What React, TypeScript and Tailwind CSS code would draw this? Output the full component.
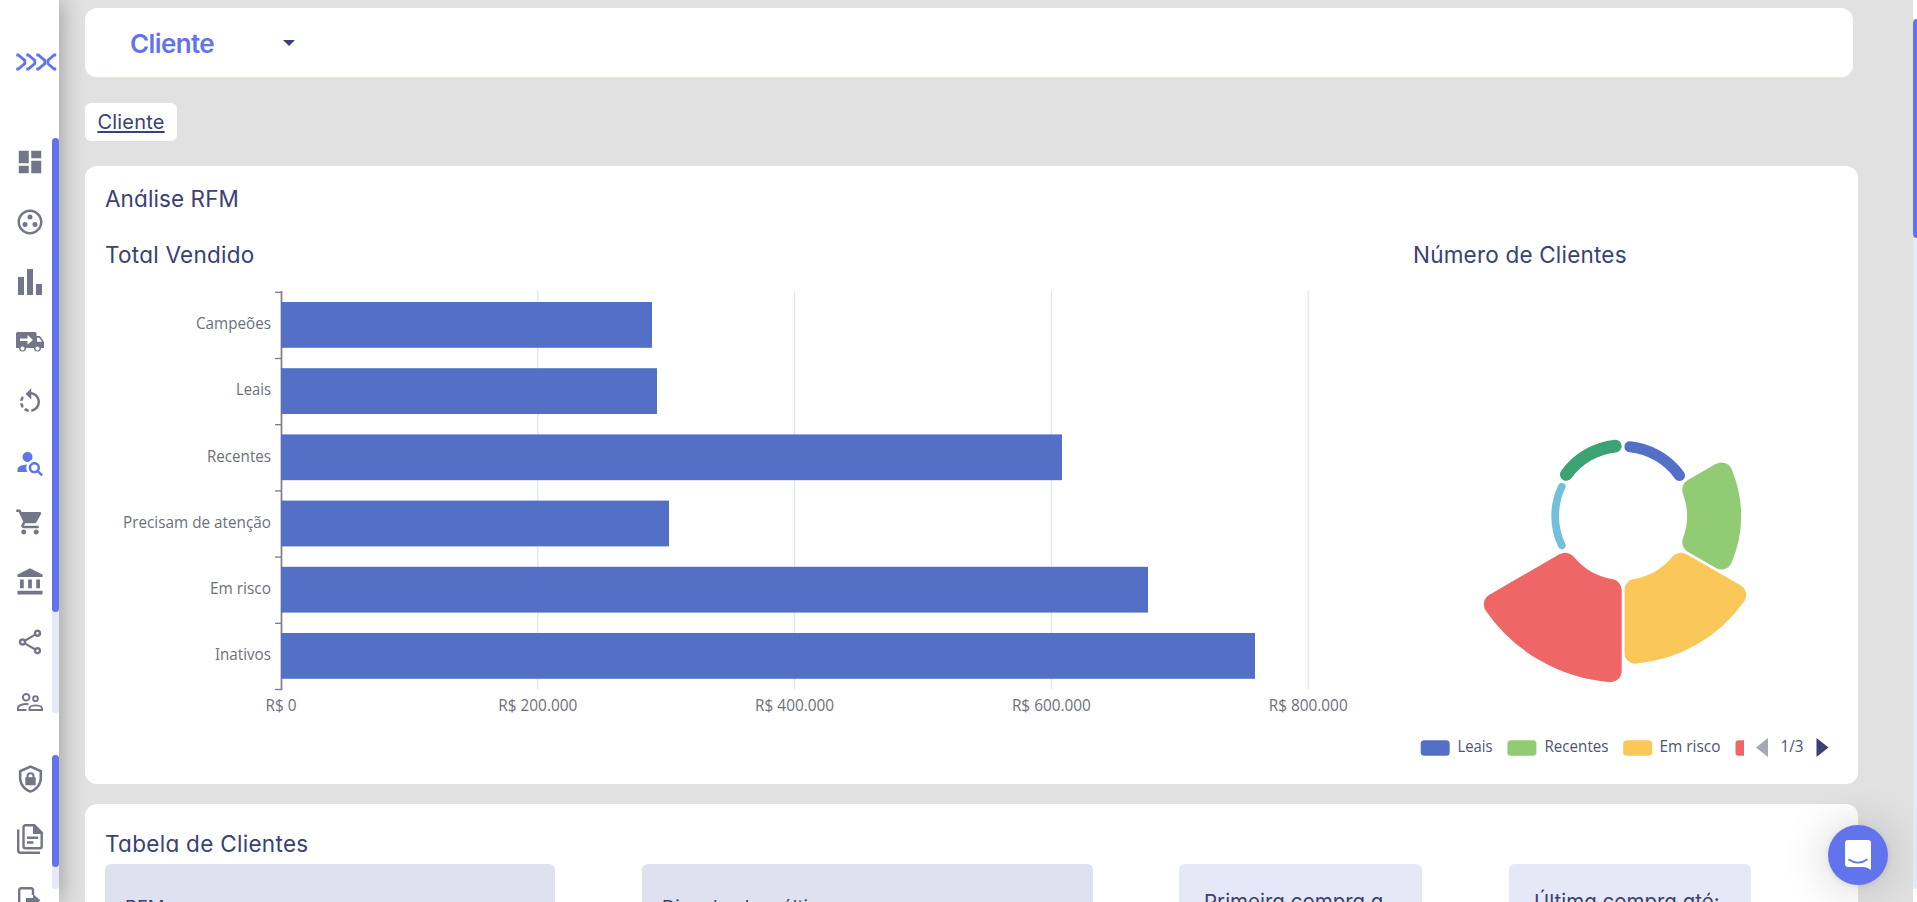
import type { ReactNode } from 'react';
import {
  MdDashboard,
  MdOutlineGroupWork,
  MdRotateLeft,
  MdShoppingCart,
  MdAccountBalance,
  MdOutlineShare,
} from 'react-icons/md';

const BLUE = '#5470c6';
const GREEN = '#91cc75';
const YELLOW = '#fac858';
const RED = '#ee6666';
const SKY = '#73c0de';
const DARK_GREEN = '#3ba272';

const bars = [
  { label: 'Campeões', end: 567, labelWidth: 75 },
  { label: 'Leais', end: 572, labelWidth: 35 },
  { label: 'Recentes', end: 977, labelWidth: 64 },
  { label: 'Precisam de atenção', end: 584, labelWidth: 148 },
  { label: 'Em risco', end: 1063, labelWidth: 61 },
  { label: 'Inativos', end: 1170, labelWidth: 56 },
];

const ticks = ['R$ 0', 'R$ 200.000', 'R$ 400.000', 'R$ 600.000', 'R$ 800.000'];

const slices = [
  { color: BLUE, outer: 76.5 },
  { color: GREEN, outer: 119.5 },
  { color: YELLOW, outer: 149.5 },
  { color: RED, outer: 168 },
  { color: SKY, outer: 73 },
  { color: DARK_GREEN, outer: 78 },
];

function BarChart() {
  const x0 = 196;
  const y0 = 23;
  const step = 66.2;
  return (
    <svg width="1290" height="464" viewBox="0 0 1290 464" className="shrink-0 font-['Open_Sans','Noto_Sans',sans-serif]" fontSize="15.7">
      {ticks.map((t, i) => (
        <g key={t}>
          {i > 0 && <line x1={x0 + i * 256.8} x2={x0 + i * 256.8} y1={y0 - 1} y2={y0 + step * 6} stroke="#e0e6f1" strokeWidth="1.3" />}
          <text
            x={x0 + i * 256.8}
            y={y0 + step * 6 + 22}
            textAnchor="middle"
            textLength={i === 0 ? 31 : 79}
            lengthAdjust="spacingAndGlyphs"
            fill="#6e7079"
          >
            {t}
          </text>
        </g>
      ))}
      <line x1={x0 + 0.5} x2={x0 + 0.5} y1={y0 - 1} y2={y0 + step * 6 + 1} stroke="#85828d" strokeWidth="1.8" />
      {[0, 1, 2, 3, 4, 5, 6].map((i) => (
        <line key={i} x1={x0 - 6} x2={x0} y1={y0 + i * step + 0.3} y2={y0 + i * step + 0.3} stroke="#7c7a86" strokeWidth="1.3" />
      ))}
      {bars.map((b, i) => (
        <g key={b.label}>
          <rect x={x0} y={y0 + 10 + i * step} width={b.end - x0} height="45.8" fill={BLUE} />
          <text
            x={x0 - 10}
            y={y0 + 37.2 + i * step}
            textAnchor="end"
            textLength={b.labelWidth}
            lengthAdjust="spacingAndGlyphs"
            fill="#6e7079"
          >
            {b.label}
          </text>
        </g>
      ))}
    </svg>
  );
}

// Rounded annular sector, angles clockwise from 12 o'clock
function slicePath(r: number, R: number, a0: number, a1: number, radius: number) {
  const c = Math.min(radius, (R - r) / 2);
  const pt = (d: number, a: number) => `${(d * Math.sin(a)).toFixed(2)} ${(-d * Math.cos(a)).toFixed(2)}`;
  const ao = Math.asin(c / (R - c));
  const ai = Math.asin(c / (r + c));
  const lo = Math.sqrt((R - c) ** 2 - c * c);
  const li = Math.sqrt((r + c) ** 2 - c * c);
  return [
    `M${pt(li, a0)}L${pt(lo, a0)}`,
    `A${c} ${c} 0 0 1 ${pt(R, a0 + ao)}`,
    `A${R} ${R} 0 0 1 ${pt(R, a1 - ao)}`,
    `A${c} ${c} 0 0 1 ${pt(lo, a1)}`,
    `L${pt(li, a1)}`,
    `A${c} ${c} 0 0 1 ${pt(r, a1 - ai)}`,
    `A${r} ${r} 0 0 0 ${pt(r, a0 + ai)}`,
    `A${c} ${c} 0 0 1 ${pt(li, a0)}Z`,
  ].join('');
}

function RoseChart() {
  return (
    <svg width="440" height="464" viewBox="0 0 440 464" className="shrink-0">
      <g transform="translate(248 247)" stroke="#fff" strokeWidth="2.6">
        {slices.map((s, i) => (
          <path key={s.color} d={slicePath(62.7, s.outer, (i * Math.PI) / 3, ((i + 1) * Math.PI) / 3, 12.5)} fill={s.color} />
        ))}
      </g>
    </svg>
  );
}

function Legend() {
  return (
    <svg width="470" height="30" viewBox="0 0 470 30" className="shrink-0 font-['Open_Sans','Noto_Sans',sans-serif]" fontSize="15.7">
      <rect x="45.7" y="7.3" width="29" height="15.5" rx="3.5" fill={BLUE} />
      <text x="82.5" y="19.3" textLength="35" lengthAdjust="spacingAndGlyphs" fill="#4f5175">Leais</text>
      <rect x="132.4" y="7.3" width="29" height="15.5" rx="3.5" fill={GREEN} />
      <text x="169.5" y="19.3" textLength="64" lengthAdjust="spacingAndGlyphs" fill="#4f5175">Recentes</text>
      <rect x="248.2" y="7.3" width="29" height="15.5" rx="3.5" fill={YELLOW} />
      <text x="284.5" y="19.3" textLength="61" lengthAdjust="spacingAndGlyphs" fill="#4f5175">Em risco</text>
      <path d="M369 7.3v15.5h-5.5a3 3 0 0 1-3-3v-9.5a3 3 0 0 1 3-3z" fill={RED} />
      <path d="M393 5v19l-12-9.5z" fill="#a5a7b1" />
      <text x="405.5" y="19.3" textLength="23" lengthAdjust="spacingAndGlyphs" fill="#4f5175">1/3</text>
      <path d="M441.5 5v19l12-9.5z" fill="#3b4075" />
    </svg>
  );
}

function Logo() {
  return (
    <svg width="42" height="18" viewBox="0 0 42 18" fill="none" stroke="#6174eb" strokeWidth="2.8">
      <path d="M.3 2h2L8.800 7.300v3.400L2.300 16H.3M10.300 2h2l6.500 5.300v3.400L12.300 16h-2M20.300 2h2l6.500 5.300v3.400L22.300 16h-2M40.200 2h-2l-6.200 5.300v3.400L38.200 16h2" />
    </svg>
  );
}

function ColumnsIcon() {
  return (
    <svg width="24" height="26" viewBox="0 0 24 26" fill="currentColor">
      <path d="M0 8h6v18H0zM9 0h6v26H9zM18 15h6v11h-6z" />
    </svg>
  );
}

function TruckIcon() {
  return (
    <svg width="28" height="21" viewBox="0 0 28 21" fill="currentColor">
      <path d="M1.5 0H19a1.5 1.5 0 0 1 1.5 1.5V4H24l4 6v6h-3a3.5 3.5 0 0 1-7 0h-8a3.5 3.5 0 0 1-7 0H0V1.5A1.5 1.5 0 0 1 1.5 0z" />
      <path d="M4 6.5h7.5V3l5.5 5-5.5 4.5V9H4zM21 5.8h2.3l2.6 4H21z" fill="#fff" />
      <circle cx="6.5" cy="16.5" r="2" fill="#fff" />
      <circle cx="21.5" cy="16.5" r="2" fill="#fff" />
    </svg>
  );
}

function PersonSearchIcon() {
  return (
    <svg width="30" height="30" viewBox="0 0 24 24" fill="currentColor">
      <path d="M15.5 12c2.5 0 4.5 2 4.5 4.500 0 .88-.25 1.710-.69 2.400l3.080 3.100L21 23.390l-3.120-3.070c-.69.430-1.510.680-2.380.680-2.500 0-4.500-2-4.500-4.500s2-4.500 4.500-4.500m0 2a2.500 2.500 0 1 0 0 5 2.500 2.500 0 0 0 0-5M10 4a4 4 0 0 1 4 4c0 .91-.31 1.750-.82 2.430-.86.320-1.630.830-2.270 1.470L10 12a4 4 0 0 1 0-8M2 20v-2c0-2.120 3.310-3.860 7.500-4-.32.780-.5 1.620-.5 2.500 0 1.290.38 2.500 1 3.500z" />
    </svg>
  );
}

function PeopleIcon() {
  return (
    <svg width="26" height="18" viewBox="0 0 26 18" fill="none" stroke="currentColor" strokeWidth="1.9">
      <circle cx="9.2" cy="4.3" r="3.3" />
      <circle cx="18.5" cy="5.7" r="2.4" />
      <path d="M11.5 11.3c-4.500-.9-10.500.9-10.500 3.700v2h8.500" />
      <path d="M12.5 17v-1.600c0-1.900 3.200-3 6.200-3s6.300 1.100 6.300 3V17z" />
    </svg>
  );
}

function ShieldLockIcon() {
  return (
    <svg width="31" height="30" viewBox="0 0 24 24" preserveAspectRatio="none" fill="currentColor">
      <path d="M12 1 3 5v6c0 5.550 3.840 10.740 9 12 5.160-1.260 9-6.450 9-12V5zm0 2.180 7 3.120V11c0 4.520-2.980 8.690-7 9.930-4.020-1.240-7-5.410-7-9.930V6.300z" />
      <path d="M8 10.500h.9V9.600a3.100 3.100 0 0 1 6.200 0v.9h.9V17H8zm2.500 0h3V9.600a1.500 1.500 0 0 0-3 0z" fillRule="evenodd" />
    </svg>
  );
}

function DocsIcon() {
  return (
    <svg width="26" height="30" viewBox="0 0 26 30" fill="none" stroke="currentColor" strokeWidth="2.4">
      <path d="M8.5 1.2h8.700l7.500 7.500v13.600a2 2 0 0 1-2 2H8.500a2 2 0 0 1-2-2V3.200a2 2 0 0 1 2-2z" />
      <path d="M1.200 5.500v21a2.200 2.200 0 0 0 2.200 2.200H23M10 13.800h11M10 18.500h6.500" />
      <path d="M17.200 1.500v7.200h7.200z" fill="currentColor" />
    </svg>
  );
}

function ExitIcon() {
  return (
    <svg width="24" height="28" viewBox="0 0 24 28" fill="none" stroke="currentColor" strokeWidth="2.4">
      <path d="M15 8V3.200a2 2 0 0 0-2-2H3.200a2 2 0 0 0-2 2v21.500a2 2 0 0 0 2 2H13a2 2 0 0 0 2-2V20" />
      <path d="M8 11h7V7l7.500 6.500L15 20v-4H8z" fill="currentColor" stroke="none" />
    </svg>
  );
}

const mainNav: { icon: ReactNode; active?: boolean }[] = [
  { icon: <MdDashboard size={30} /> },
  { icon: <MdOutlineGroupWork size={30} /> },
  { icon: <ColumnsIcon /> },
  { icon: <TruckIcon /> },
  { icon: <MdRotateLeft size={30} /> },
  { icon: <PersonSearchIcon />, active: true },
  { icon: <MdShoppingCart size={30} /> },
  { icon: <MdAccountBalance size={30} /> },
  { icon: <MdOutlineShare size={30} /> },
  { icon: <PeopleIcon /> },
];

function Sidebar() {
  return (
    <aside className="flex h-full w-[59px] shrink-0 flex-col overflow-hidden bg-white">
      <div className="h-[132px] shrink-0 pt-[53px] pl-4">
        <Logo />
      </div>
      <div className="flex h-[600px] shrink-0">
        <nav className="flex w-[52px] flex-col pl-2">
          {mainNav.map((item, i) => (
            <a key={i} className={`flex h-[60px] items-center justify-center ${item.active ? 'text-[#6174eb]' : 'text-[#737589]'}`}>
              {item.icon}
            </a>
          ))}
        </nav>
        <div className="mt-1.5 h-[575px] w-[7px] rounded-full bg-[#e5e9f8]">
          <div className="h-[474px] rounded-full bg-[#6174eb]" />
        </div>
      </div>
      <div className="mt-[17px] flex h-[180px] shrink-0">
        <nav className="flex w-[52px] flex-col pl-2 text-[#737589]">
          <a className="flex h-[60px] items-center justify-center"><ShieldLockIcon /></a>
          <a className="flex h-[60px] items-center justify-center"><DocsIcon /></a>
          <a className="flex h-[60px] items-center justify-center pt-1"><ExitIcon /></a>
        </nav>
        <div className="mt-1.5 h-[134px] w-[7px] rounded-full bg-[#e5e9f8]">
          <div className="h-28 rounded-full bg-[#6174eb]" />
        </div>
      </div>
    </aside>
  );
}

function ChatButton() {
  return (
    <button className="fixed right-[29px] bottom-[17px] flex size-[60px] items-center justify-center rounded-full bg-[#6174eb] shadow-[0_1px_6px_rgba(0,0,0,0.1),0_2px_48px_rgba(0,0,0,0.2)]">
      <svg width="26" height="30" viewBox="0 0 26 30" fill="none">
        <path d="M3 0h20a3 3 0 0 1 3 3v27c-2.500-1.800-5-3-8-3H3a3 3 0 0 1-3-3V3a3 3 0 0 1 3-3z" fill="#fff" />
        <path d="M4 19.500c5.500 4.200 12.500 4.200 18 0" stroke="#6174eb" strokeWidth="1.6" strokeLinecap="round" />
      </svg>
    </button>
  );
}

export default function App() {
  return (
    <div className="flex h-screen overflow-hidden bg-[#e1e1e1] font-['Inter','Open_Sans',sans-serif] text-[#3b4075] [font-feature-settings:'cv11','ss03']">
      <div className="z-0 shadow-[1px_0_24px_rgba(0,0,0,0.33)]">
        <Sidebar />
      </div>

      <main className="z-10 flex min-w-0 flex-1 flex-col overflow-hidden pt-2 pl-[26px]">
        <div className="flex h-[70px] w-[1768px] shrink-0 items-center rounded-xl border-b border-[#e3e6f5] bg-white pl-[45px]">
          <span className="w-[153px] pt-px text-[26px] font-semibold tracking-[-0.6px] text-[#6174eb]">Cliente</span>
          <svg width="12" height="6" viewBox="0 0 12 6" fill="#3b4075">
            <path d="M0 0h12L6 6z" />
          </svg>
        </div>

        <div className="mt-[25px] flex h-[38px] w-[92px] shrink-0 items-center justify-center rounded-md bg-white text-[20px] tracking-[0.2px] underline underline-offset-2">
          Cliente
        </div>

        <section className="mt-[25px] h-[618px] w-[1773px] shrink-0 rounded-xl bg-white">
          <h2 className="h-[57px] pt-[17px] pl-5 text-[22.5px] leading-8 font-[370] tracking-[0.1px]">Análise RFM</h2>
          <div className="flex h-[46px]">
            <h3 className="w-[1308px] pt-4 pl-5 text-[22.5px] leading-8 font-[370] tracking-[0.25px]">Total Vendido</h3>
            <h3 className="pt-4 pl-5 text-[22.5px] leading-8 font-[370] tracking-[0.2px]">Número de Clientes</h3>
          </div>
          <div className="flex">
            <BarChart />
            <RoseChart />
          </div>
          <div className="flex pl-[1290px]">
            <Legend />
          </div>
        </section>

        <section className="mt-5 h-40 w-[1773px] shrink-0 rounded-xl bg-white pl-5">
          <h2 className="h-[60px] pt-6 text-[22.5px] leading-8 font-[370] tracking-[0.3px]">Tabela de Clientes</h2>
          <div className="flex">
            <div className="h-24 w-[450px] rounded-md bg-[#dee1ef] pt-[30px] pl-5 text-[18.5px]">RFM</div>
            <div className="ml-[87px] h-24 w-[451px] rounded-md bg-[#dee1ef] pt-[30px] pl-5 text-[18.5px]">Dias desde a última compra</div>
            <div className="ml-[86px] h-24 w-[243px] rounded-md bg-[#e5e8f6] pt-[23px] pl-[25px] text-[20.5px]">Primeira compra a</div>
            <div className="ml-[87px] h-24 w-[242px] rounded-md bg-[#e5e8f6] pt-[23px] pl-[25px] text-[20.5px]">Última compra até:</div>
          </div>
        </section>
      </main>

      <div className="z-10 w-1 shrink-0 bg-white pt-[19px]">
        <div className="h-[870px] rounded-l bg-[#e5e9f8]">
          <div className="h-[219px] rounded-l bg-[#6174eb]" />
        </div>
      </div>

      <div className="relative z-20">
        <ChatButton />
      </div>
    </div>
  );
}
